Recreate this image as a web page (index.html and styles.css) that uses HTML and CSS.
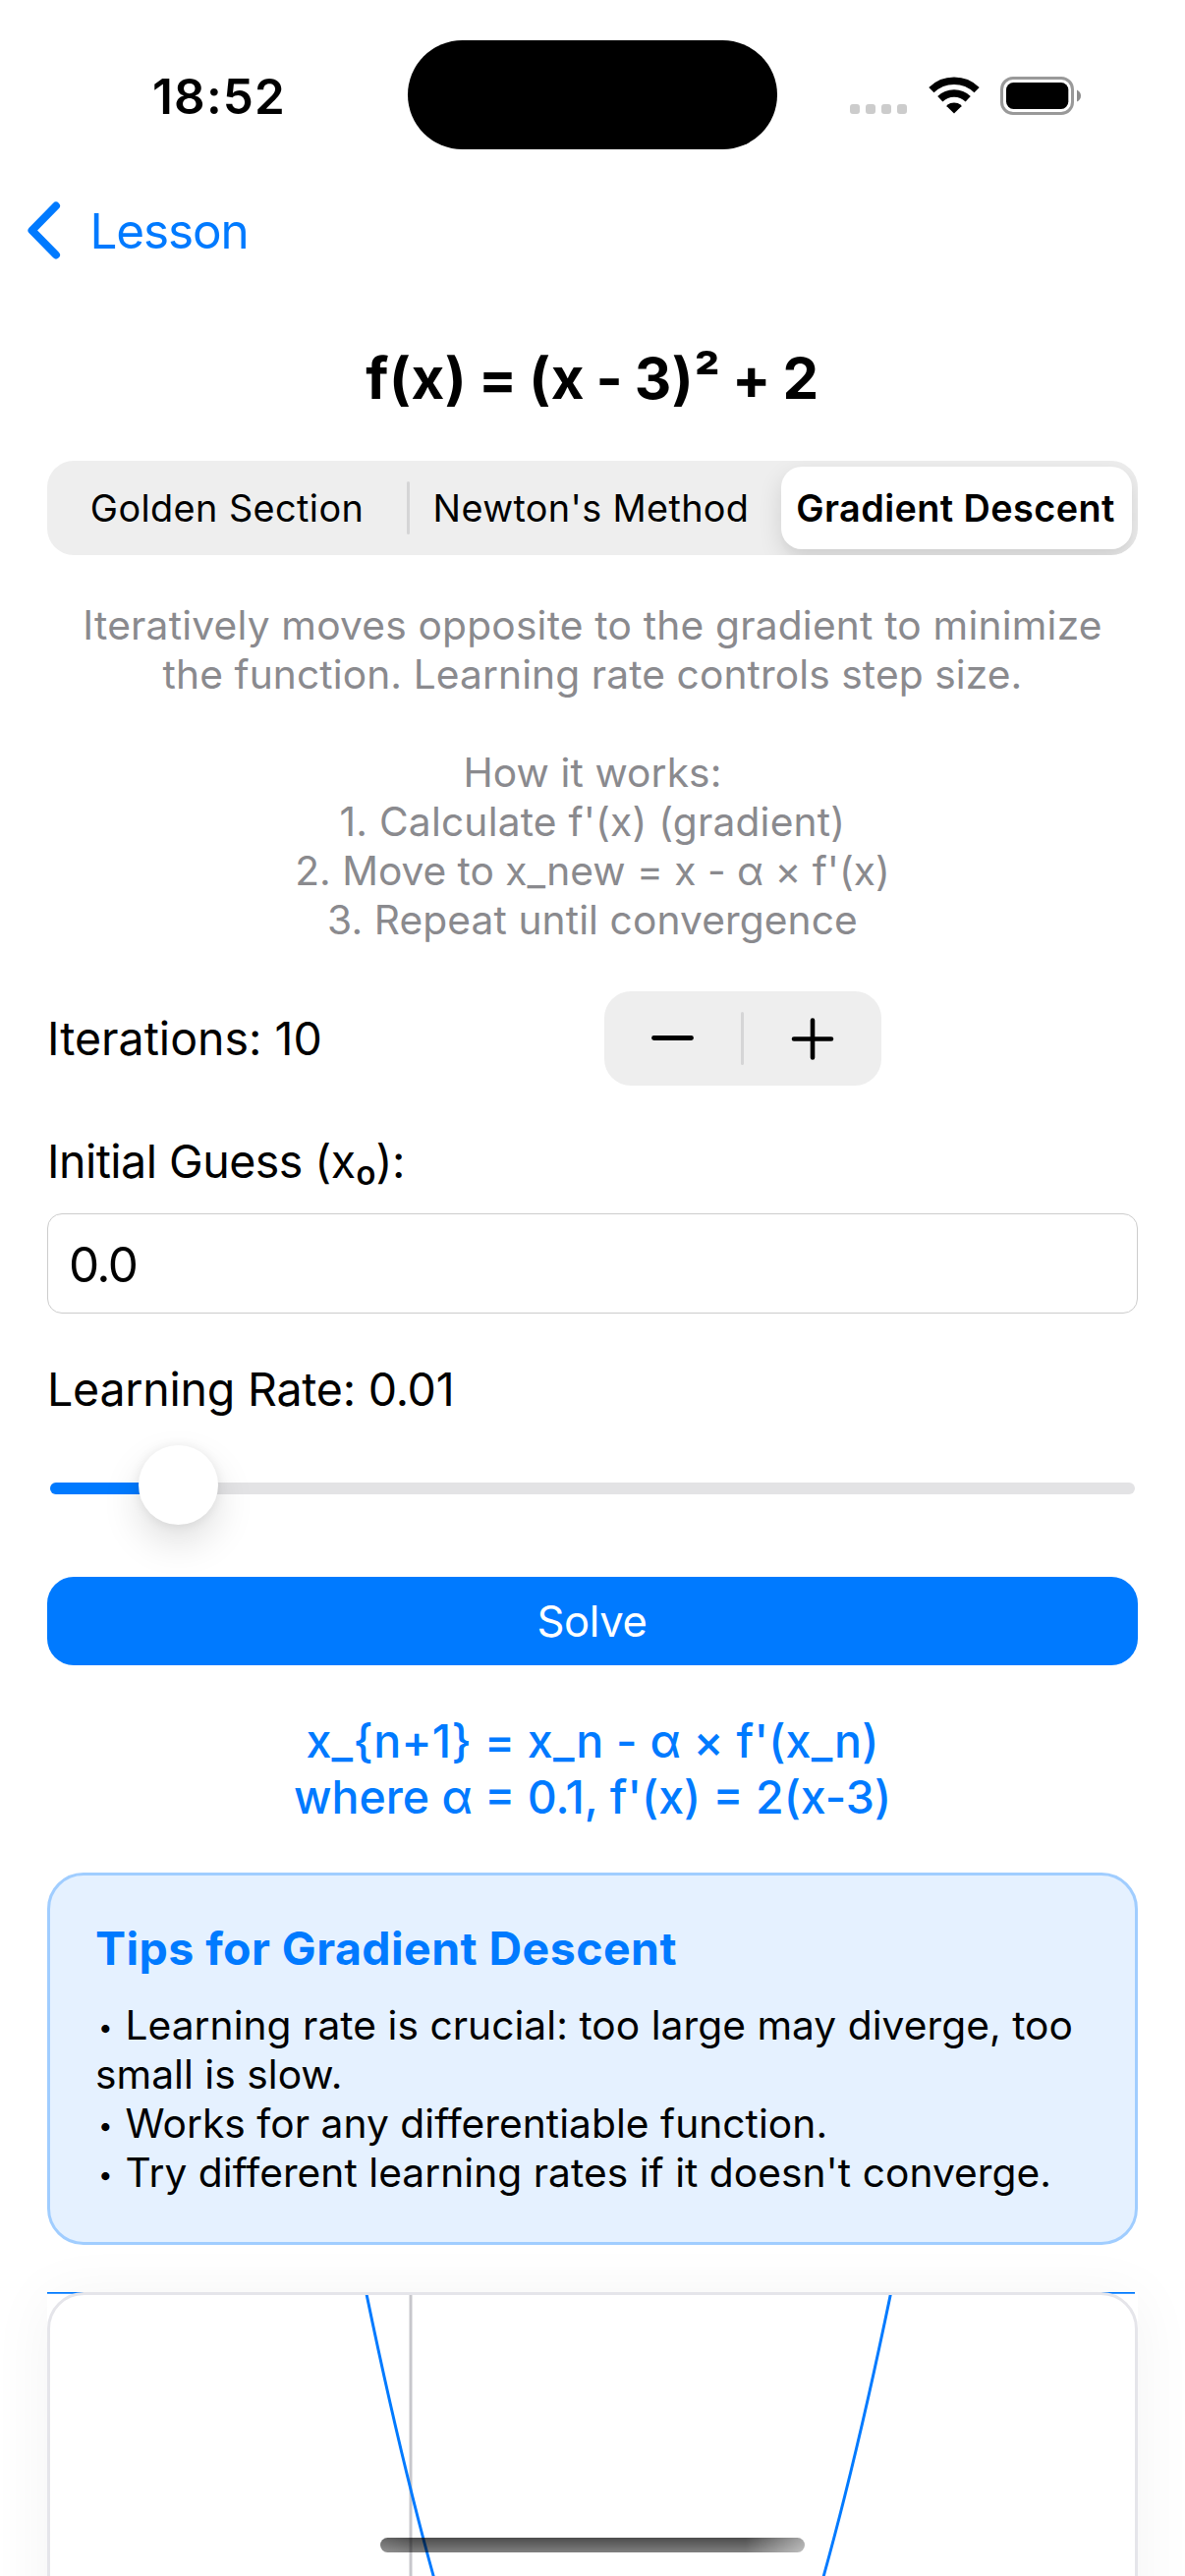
FILE: index.html
```html
<!DOCTYPE html>
<html lang="en">
<head>
<meta charset="utf-8">
<title>Gradient Descent</title>
<link rel="stylesheet" href="styles.css">
</head>
<body>
<div class="screen">
  <header class="status">
    <div class="time">18:52</div>
    <div class="island"></div>
    <div class="indicators">
      <div class="cell"><i></i><i></i><i></i><i></i></div>
      <svg class="wifi" width="52" height="38" viewBox="0 0 52 38">
        <path d="M2.9 13.6A33.2 33.2 0 0 1 49.1 13.6M11.8 22.8A20.5 20.5 0 0 1 40.2 22.8" fill="none" stroke="#000" stroke-width="7.5"/>
        <path d="M26 37.5L18.6 30.2Q18.3 29.4 19 28.8A11.6 11.6 0 0 1 33 28.8Q33.7 29.4 33.4 30.2Z"/>
      </svg>
      <svg class="battery" width="83" height="39" viewBox="0 0 83 39">
        <rect x="1.5" y="1.5" width="72" height="36" rx="11.5" fill="none" stroke="#999" stroke-width="3"/>
        <rect x="6" y="6" width="63.300" height="27" rx="7.5"/>
        <path d="M78 13.500Q82 15.500 82 19.500Q82 23.500 78 25.500Z" fill="#8c8c8c"/>
      </svg>
    </div>
  </header>

  <nav class="nav">
    <svg width="36" height="60" viewBox="0 0 36 60"><path d="M30 4.500L5.500 29.500L30 54.500" fill="none" stroke="#007aff" stroke-width="8" stroke-linecap="round" stroke-linejoin="round"/></svg>
    <span class="back">Lesson</span>
  </nav>

  <main class="content">
    <h1 class="title">f(x) = (x - 3)² + 2</h1>

    <div class="segments">
      <span class="segment">Golden Section</span>
      <span class="divider"></span>
      <span class="segment newton">Newton's Method</span>
      <span class="segment selected">Gradient Descent</span>
    </div>

    <p class="about"><span class="lead">Iteratively moves opposite to the gradient to minimize</span><br>the function. Learning rate controls step size.<br><br>How it works:<br><span class="lead">1. Calculate f'(x) (gradient)</span><br><span class="tight">2. Move to x_new = x - α × f'(x)</span><br>3. Repeat until convergence</p>

    <div class="iterations">
      <span class="label">Iterations: 10</span>
      <div class="stepper">
        <svg width="44" height="44" viewBox="0 0 44 44"><path d="M3.500 21.500H41.500" stroke="#000" stroke-width="4.800" stroke-linecap="round"/></svg>
        <span class="divider"></span>
        <svg width="44" height="44" viewBox="0 0 44 44"><path d="M3 22.500H41M22 3.500V41.500" stroke="#000" stroke-width="4.600" stroke-linecap="round"/></svg>
      </div>
    </div>

    <div class="field-group">
      <span class="label guess">Initial Guess (x₀):</span>
      <div class="field">0.0</div>
    </div>

    <div class="rate-group">
      <span class="label rate">Learning Rate: 0.01</span>
      <div class="slider">
        <div class="track"><div class="fill"></div></div>
        <div class="knob"></div>
      </div>
    </div>

    <div class="solve">Solve</div>

    <p class="formula"><span class="update">x_{n+1} = x_n - α × f'(x_n)</span><br>where α = 0.1, f'(x) = 2(x-3)</p>

    <section class="tips">
      <h2>Tips for Gradient Descent</h2>
      <p><b>•</b> Learning rate is crucial: too large may diverge, too<br>small is slow.<br><b>•</b> Works for any differentiable function.<br><b>•</b> Try different learning rates if it doesn't converge.</p>
    </section>

    <section class="chart">
      <svg width="1110" height="289" viewBox="0 0 1110 289">
        <path d="M370 0V289" stroke="#c7c7cc" stroke-width="3"/>
        <path d="M325 2Q591.700 1290 858.400 2" fill="none" stroke="#007aff" stroke-width="3"/>
        <path d="M0 0H1107V1.700H0Z" fill="#007aff"/>
        <rect x="1.500" y="1.500" width="1107" height="400" rx="36" fill="none" stroke="#e5e5ea" stroke-width="3"/>
      </svg>
    </section>
  </main>

  <div class="home-indicator"></div>
</div>
</body>
</html>
```
FILE: styles.css
```css
* { box-sizing: border-box; }

body {
  margin: 0;
  background: #fff;
  color: #000;
  font-family: Inter, "Liberation Sans", sans-serif;
}

h1, h2, p { margin: 0; }
svg { display: block; }

.screen {
  position: relative;
  width: 1206px;
  height: 2622px;
  overflow: hidden;
}

/* Status bar */
.status {
  display: grid;
  grid-template-columns: 415px 376px 1fr;
  height: 169px;
}

.time {
  padding: 68px 0 0 155px;
  font-size: 49.4px;
  font-weight: 600;
  line-height: 60px;
  letter-spacing: 1.2px;
}

.island {
  height: 111px;
  margin-top: 41px;
  border-radius: 56px;
  background: #000;
}

.indicators {
  display: flex;
  align-items: flex-start;
  padding: 78px 0 0 74px;
}

.cell {
  display: flex;
  gap: 6px;
  margin: 28px 21.500px 0 0;
}

.cell i {
  width: 10px;
  height: 10px;
  border-radius: 3px;
  background: #ccc;
}

.wifi { margin-right: 21px; }

/* Navigation */
.nav {
  display: flex;
  align-items: center;
  height: 132px;
  padding-left: 27px;
}

.back {
  margin-left: 28.500px;
  color: #007aff;
  font-size: 49.4px;
  line-height: 60px;
  letter-spacing: -1.1px;
}

.content {
  display: flex;
  flex-direction: column;
  gap: 48px;
  padding: 48px 48px 0;
}

.title {
  font-size: 58.2px;
  font-weight: 700;
  line-height: 72px;
  letter-spacing: 0.6px;
  word-spacing: -3px;
  text-align: center;
}

/* Segmented control */
.segments {
  display: grid;
  grid-template-columns: 366px 3px 378px 357px;
  align-items: center;
  height: 96px;
  border-radius: 27px;
  background: #eee;
  overflow: hidden;
}

.segment {
  font-size: 37.8px;
  line-height: 84px;
  letter-spacing: 0.42px;
  text-align: center;
  white-space: nowrap;
}

.newton { padding-right: 9px; letter-spacing: 0.36px; }

.selected {
  padding-right: 2px;
  border-radius: 21px;
  background: #fff;
  font-weight: 600;
  box-shadow: 0 9px 24px rgba(0, 0, 0, 0.12), 0 9px 3px rgba(0, 0, 0, 0.02);
}

.divider {
  width: 3px;
  height: 54px;
  border-radius: 1.5px;
  background: #d5d5d6;
}

.about {
  margin: -1px 0;
  color: #8a8a8e;
  font-size: 40.7px;
  line-height: 50px;
  letter-spacing: 0.1px;
  text-align: center;
  white-space: nowrap;
}

.lead { letter-spacing: 0.2px; }
.tight { letter-spacing: -0.03px; }

.label {
  font-size: 46.5px;
  line-height: 57px;
  letter-spacing: 0;
}

.guess {
  padding-top: 1px;
  margin-bottom: -1px;
  letter-spacing: -0.52px;
}

.rate {
  padding-top: 1px;
  margin-bottom: -1px;
  letter-spacing: -0.23px;
}

.iterations {
  display: grid;
  grid-template-columns: 567px 282px;
  align-items: center;
}

.stepper {
  display: flex;
  align-items: center;
  justify-content: space-between;
  height: 96px;
  padding: 0 48px 0 47px;
  border-radius: 27px;
  background: #eee;
}

.field-group {
  display: flex;
  flex-direction: column;
  gap: 25px;
}

.field {
  height: 102px;
  padding: 1px 21px 0;
  border: 1px solid #ccc;
  border-radius: 15px;
  font-size: 49.4px;
  line-height: 100px;
  letter-spacing: -1.6px;
}

/* Learning rate */
.rate-group {
  display: flex;
  flex-direction: column;
  gap: 25px;
}

.slider {
  position: relative;
  height: 90px;
  padding: 42px 3px 0;
}

.track {
  height: 12px;
  border-radius: 6px;
  background: #e3e3e5;
}

.fill {
  width: 130px;
  height: 12px;
  border-radius: 6px;
  background: #007aff;
}

.knob {
  position: absolute;
  top: 4px;
  left: 93px;
  width: 81px;
  height: 81px;
  border-radius: 50%;
  background: #fff;
  box-shadow: 0 18px 39px rgba(0, 0, 0, 0.13), 0 1px 12px rgba(0, 0, 0, 0.08);
}

.solve {
  height: 90px;
  padding: 1px 1px 0 0;
  border-radius: 27px;
  background: #007aff;
  color: #fff;
  font-size: 43.6px;
  line-height: 90px;
  letter-spacing: -0.38px;
  text-align: center;
}

.formula {
  margin-top: 1px;
  color: #007aff;
  font-size: 46.5px;
  font-weight: 500;
  line-height: 57px;
  text-align: center;
}

.update { letter-spacing: 0.23px; }

.tips {
  height: 379px;
  padding: 46px 0 0 46px;
  border: 3px solid #a0cdff;
  border-radius: 37px;
  background: #e5f1ff;
}

.tips h2 {
  color: #007aff;
  font-size: 46.5px;
  font-weight: 700;
  line-height: 57px;
  letter-spacing: 0.43px;
}

.tips p {
  margin-top: 25px;
  font-size: 40.7px;
  line-height: 50px;
  letter-spacing: 0.04px;
  white-space: nowrap;
}

.tips b {
  display: inline-block;
  width: 19px;
  padding-left: 3px;
  font-size: 26px;
  font-weight: 400;
  line-height: 1;
  vertical-align: 3px;
}

.chart {
  height: 600px;
  background: #fff;
  box-shadow: 0 6px 60px rgba(0, 0, 0, 0.05);
}

.home-indicator {
  position: absolute;
  left: 387px;
  bottom: 24px;
  width: 432px;
  height: 15px;
  border-radius: 7.5px;
  background:
    linear-gradient(90deg, rgba(255, 255, 255, 0.15), rgba(255, 255, 255, 0) 8%, rgba(255, 255, 255, 0) 86%, rgba(255, 255, 255, 0.5)),
    linear-gradient(rgba(0, 0, 0, 0.7), rgba(0, 0, 0, 0.5));
}
```
